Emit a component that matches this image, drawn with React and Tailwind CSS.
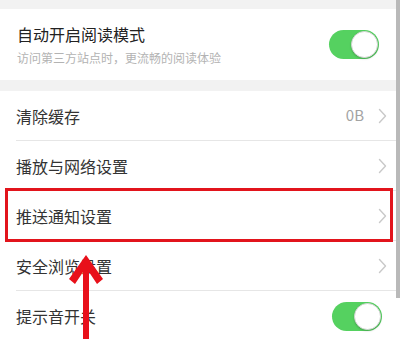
import React from 'react';

const Toggle = () => (
  <div className="w-[50px] h-[29px] rounded-full bg-[#55d160] flex items-center justify-end p-[1px]">
    <div className="w-[27px] h-[27px] rounded-full bg-white border border-[#d6d6d6] shadow-[0_1px_2px_rgba(0,0,0,0.2)]" />
  </div>
);

const Chevron = () => (
  <svg width="9" height="16" viewBox="0 0 9 16" fill="none" className="shrink-0">
    <path d="M1.5 1.5 L7.5 8 L1.5 14.5" stroke="#c9c9c9" strokeWidth="1.4" strokeLinecap="round" strokeLinejoin="round" />
  </svg>
);

const Row = ({ label, value, right, last }) => (
  <div className="h-[50px] pl-[16px] flex">
    <div className={`flex-1 flex items-center justify-between pr-[13px] ${last ? '' : 'border-b border-[#e6e6e6]'}`}>
      <span className="text-[16px] text-[#333]">{label}</span>
      <div className="flex items-center gap-[14px]">
        {value && <span className="text-[15px] text-[#a3a3a3]">{value}</span>}
        {right || <Chevron />}
      </div>
    </div>
  </div>
);

export default function App() {
  return (
    <div className="relative w-[400px] h-[339px] overflow-hidden bg-[#f2f2f2] font-['Noto_Sans_CJK_SC','Noto_Sans',sans-serif]">
      <div className="h-[9px]" />

      {/* reading mode card */}
      <div className="h-[71px] bg-white flex items-center justify-between pl-[17px] pr-[21px]">
        <div className="flex flex-col">
          <span className="text-[16px] leading-[23px] text-[#222]">自动开启阅读模式</span>
          <span className="text-[12px] leading-[19px] text-[#b3b3b3] mt-[2px]">访问第三方站点时，更流畅的阅读体验</span>
        </div>
        <Toggle />
      </div>

      <div className="h-[11px]" />

      {/* settings list */}
      <div className="bg-white">
        <Row label="清除缓存" value="0B" />
        <Row label="播放与网络设置" />
        <Row label="推送通知设置" />
        <Row label="安全浏览设置" />
        <Row label="提示音开关" right={<div className="mr-[5px]"><Toggle /></div>} last />
      </div>

      {/* scrollbar */}
      <div className="absolute right-0 top-0 w-[4px] h-[298px] bg-[#b9b9b9]" />

      {/* annotation box */}
      <div className="absolute left-[5px] top-[188px] w-[388px] h-[54px] border-[3px] border-[#e2141c]" />

      {/* annotation arrow */}
      <svg className="absolute left-0 top-0" width="400" height="339" viewBox="0 0 400 339">
        <polygon
          points="86,255 103,279 97,284 89,272 89,340 83,340 83,272 75,284 69,279"
          fill="#e8101a"
        />
      </svg>
    </div>
  );
}
